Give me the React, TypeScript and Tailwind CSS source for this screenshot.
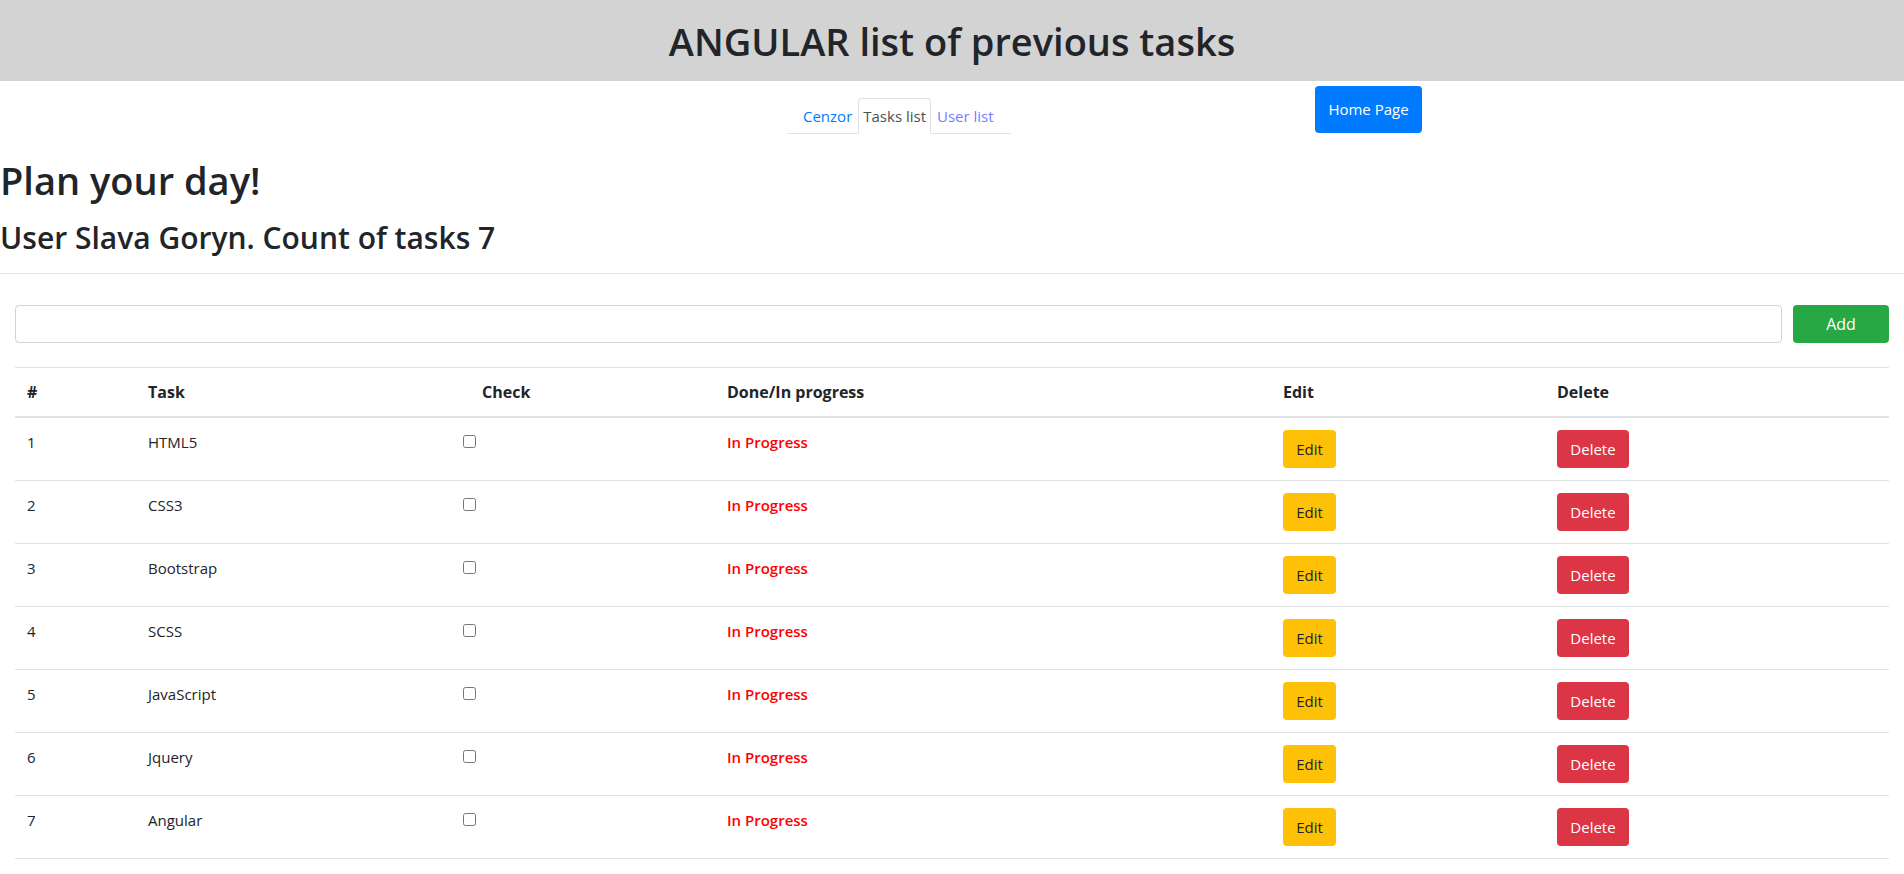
import { useState } from "react";

interface Task {
    id: number;
    title: string;
    done: boolean;
}

const initialTasks: Task[] = [
    { id: 1, title: "HTML5", done: false },
    { id: 2, title: "CSS3", done: false },
    { id: 3, title: "Bootstrap", done: false },
    { id: 4, title: "SCSS", done: false },
    { id: 5, title: "JavaScript", done: false },
    { id: 6, title: "Jquery", done: false },
    { id: 7, title: "Angular", done: false },
];

export default function App() {
    const [tasks] = useState<Task[]>(initialTasks);

    return (
        <div className="min-h-screen bg-white font-['Open_Sans','Noto_Sans',sans-serif] text-[#212529]">
            {/* Header */}
            <div className="h-[81px] bg-[#d3d3d3] pt-[17px]">
                <h1 className="text-center text-[38px] font-semibold leading-[48px]">
                    ANGULAR list of previous tasks
                </h1>
            </div>

            {/* Navigation */}
            <div className="flex items-start pt-[5px]">
                <div className="ml-[787px] w-[528px]">
                    <ul className="mt-[12px] inline-flex border-b border-[#dee2e6] text-[15px] leading-[24px]">
                        <li>
                            <a className="-mb-px block border border-transparent py-[5px] pl-[15px] pr-[5px] text-[#007bff]">
                                Cenzor
                            </a>
                        </li>
                        <li>
                            <a className="-mb-px block rounded-t border border-[#dee2e6] border-b-white bg-white px-[4px] py-[5px] text-[#495057]">
                                Tasks list
                            </a>
                        </li>
                        <li>
                            <a className="-mb-px block border border-transparent py-[5px] pl-[5px] pr-[16px] text-[#6f7dff]">
                                User list
                            </a>
                        </li>
                    </ul>
                </div>
                <button className="h-[47px] w-[107px] rounded bg-[#007bff] text-[15px] text-white">
                    Home Page
                </button>
            </div>

            <h1 className="mt-[22px] text-[38px] font-semibold leading-[48px]">
                Plan your day!
            </h1>
            <h2 className="mt-[15px] text-[30px] font-semibold leading-[38px]">
                User Slava Goryn. Count of tasks 7
            </h2>
            <hr className="mt-[16px] border-t border-[#e5e5e5]" />

            <div className="px-[15px]">
                <div className="mt-[31px] flex gap-[11px]">
                    <input
                        type="text"
                        className="h-[38px] flex-1 rounded border border-[#ced4da] px-3 text-[16px] outline-none"
                    />
                    <button className="h-[38px] w-[96px] rounded bg-[#28a745] text-[16px] text-white">
                        Add
                    </button>
                </div>

                <table className="mt-[24px] w-full border-collapse text-left text-[15px] leading-[24px]">
                    <colgroup>
                        <col className="w-[121px]" />
                        <col className="w-[311px]" />
                        <col className="w-[268px]" />
                        <col className="w-[556px]" />
                        <col className="w-[274px]" />
                        <col />
                    </colgroup>
                    <thead>
                        <tr className="border-t border-b-2 border-[#dee2e6] text-[16px]">
                            <th className="p-3 font-bold">#</th>
                            <th className="p-3 font-bold">Task</th>
                            <th className="py-3 pl-[35px] font-bold">Check</th>
                            <th className="p-3 font-bold">Done/In progress</th>
                            <th className="p-3 font-bold">Edit</th>
                            <th className="p-3 font-bold">Delete</th>
                        </tr>
                    </thead>
                    <tbody>
                        {tasks.map((task) => (
                            <tr key={task.id} className="border-b border-[#dee2e6] align-top">
                                <td className="p-3">{task.id}</td>
                                <td className="p-3">{task.title}</td>
                                <td className="p-3">
                                    <input
                                        type="checkbox"
                                        defaultChecked={task.done}
                                        className="ml-[4px] mt-[5px] h-[13px] w-[13px]"
                                    />
                                </td>
                                <td className="p-3 font-semibold text-[#ff0000]">
                                    {task.done ? "Done" : "In Progress"}
                                </td>
                                <td className="p-3">
                                    <button className="h-[38px] w-[53px] rounded bg-[#ffc107] text-[#212529]">
                                        Edit
                                    </button>
                                </td>
                                <td className="p-3">
                                    <button className="h-[38px] w-[72px] rounded bg-[#dc3545] text-white">
                                        Delete
                                    </button>
                                </td>
                            </tr>
                        ))}
                    </tbody>
                </table>
            </div>
        </div>
    );
}
